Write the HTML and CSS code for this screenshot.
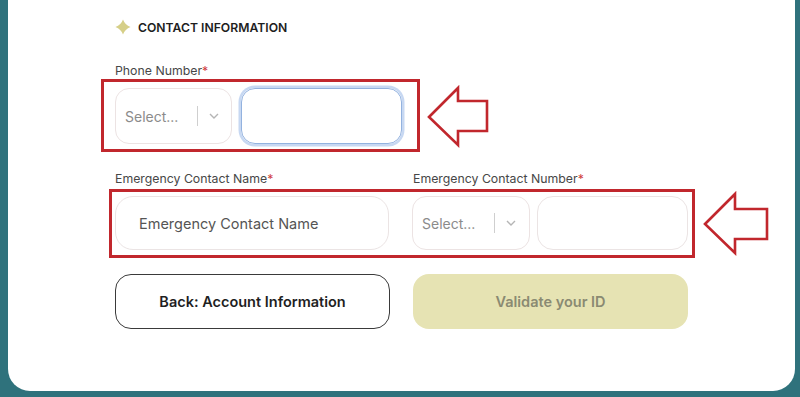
FILE: index.html
```html
<!DOCTYPE html>
<html lang="en">
<head>
<meta charset="utf-8">
<title>Contact Information</title>
<link rel="stylesheet" href="styles.css">
</head>
<body>
<main class="card">
  <section class="section">
    <h2 class="heading">
      <svg class="star" viewBox="0 0 16 16" width="16" height="16" aria-hidden="true">
        <path d="M8 0.5 Q10 6 15.5 8 Q10 10 8 15.5 Q6 10 0.5 8 Q6 6 8 0.5 Z" fill="#d6cf88"/>
      </svg>
      CONTACT INFORMATION
    </h2>

    <label class="label label-phone">Phone Number<span class="req">*</span></label>
    <div class="row row-phone">
      <div class="select select-sm">
        <span class="ph">Select...</span>
        <span class="sep"></span>
        <svg class="chev" viewBox="0 0 10 6" width="10" height="6" aria-hidden="true"><path d="M1 1 L5 5 L9 1" fill="none" stroke="#b5b5b5" stroke-width="1.4"/></svg>
      </div>
      <div class="input input-focus"></div>
    </div>

    <div class="grid labels">
      <label class="label">Emergency Contact Name<span class="req">*</span></label>
      <label class="label">Emergency Contact Number<span class="req">*</span></label>
    </div>
    <div class="grid row-emergency">
      <div class="input input-name"><span class="ph-dark">Emergency Contact Name</span></div>
      <div class="pair">
        <div class="select select-md">
          <span class="ph">Select...</span>
          <span class="sep"></span>
          <svg class="chev" viewBox="0 0 10 6" width="10" height="6" aria-hidden="true"><path d="M1 1 L5 5 L9 1" fill="none" stroke="#b5b5b5" stroke-width="1.4"/></svg>
        </div>
        <div class="input input-num"></div>
      </div>
    </div>

    <div class="grid buttons">
      <button class="btn btn-back">Back: Account Information</button>
      <button class="btn btn-validate">Validate your ID</button>
    </div>
  </section>
</main>

<svg class="annotations" width="800" height="397" viewBox="0 0 800 397" aria-hidden="true">
  <g fill="none" stroke="#c1272d" stroke-width="3">
    <rect x="102.5" y="80.5" width="316" height="70"/>
    <rect x="110.5" y="190.5" width="583" height="66"/>
    <path d="M429 117 L458 88 L458 101 L487 101 L487 131 L458 131 L458 145 Z" stroke-width="2.6" stroke-linejoin="miter"/>
    <path d="M705 224 L735 194 L735 209 L767 209 L767 239 L735 239 L735 253 Z" stroke-width="2.6" stroke-linejoin="miter"/>
  </g>
</svg>
</body>
</html>
```

FILE: styles.css
```css
* { box-sizing: border-box; }

html, body {
  margin: 0;
  padding: 0;
}

body {
  width: 800px;
  height: 397px;
  background: #2f727c;
  font-family: "Inter", "Lato", sans-serif;
  position: relative;
  overflow: hidden;
  padding: 0 5px 6px 8px;
}

.card {
  background: #ffffff;
  height: 391px;
  border-radius: 0 0 22px 22px;
  padding: 18px 0 0 107px;
}

.section {
  display: flex;
  flex-direction: column;
}

.heading {
  display: flex;
  align-items: center;
  gap: 7px;
  height: 18px;
  margin: 0;
  font-size: 12.2px;
  font-weight: 600;
  color: #1e1e1e;
  letter-spacing: 0;
}

.star {
  width: 16px;
  height: 16px;
  flex: none;
}

.label {
  display: block;
  font-size: 12.3px;
  line-height: 16px;
  color: #474747;
}

.req { color: #d04040; }

.label-phone { margin-top: 27px; }

.row {
  display: flex;
  gap: 8px;
}

.row-phone {
  margin-top: 9px;
  height: 56px;
}

.select {
  display: flex;
  align-items: center;
  border: 1px solid #ece3e3;
  border-radius: 14px;
  padding-left: 9px;
  height: 100%;
}

.select-sm { width: 117px; }
.select-md { width: 118px; }

.ph {
  font-size: 14px;
  color: #8b8b8b;
  width: 72px;
}

.sep {
  width: 1px;
  height: 20px;
  background: #cfcfcf;
  margin-right: 11px;
}

.chev { flex: none; }

.input {
  border: 1px solid #ebe4e4;
  border-radius: 16px;
  height: 100%;
}

.input-focus {
  width: 161px;
  margin-left: 1px;
  border: 1px solid #93b2df;
  box-shadow: 0 0 0 2.5px #c7d8f2;
  border-radius: 14px;
}

.grid {
  display: grid;
  grid-template-columns: 275px 275px;
  column-gap: 23px;
}

.labels {
  margin-top: 27px;
}

.row-emergency {
  margin-top: 9px;
  height: 54px;
}

.input-name {
  width: 274px;
  display: flex;
  align-items: center;
  padding-left: 23px;
  border-radius: 18px;
}

.ph-dark {
  font-size: 14.5px;
  color: #555555;
}

.pair {
  display: flex;
  gap: 7px;
  margin-left: -1px;
  height: 54px;
}

.input-num {
  width: 151px;
  border-radius: 16px;
}

.buttons {
  margin-top: 24px;
  height: 55px;
}

.btn {
  font-family: inherit;
  font-size: 14.5px;
  border-radius: 16px;
  height: 55px;
  cursor: pointer;
}

.btn-back {
  background: #ffffff;
  border: 1px solid #3a3a3a;
  color: #1f1f1f;
  font-weight: 600;
}

.btn-validate {
  background: #e6e3b3;
  border: none;
  color: #8a8a72;
  font-weight: 600;
}

.annotations {
  position: absolute;
  top: 0;
  left: 0;
  pointer-events: none;
}
```
